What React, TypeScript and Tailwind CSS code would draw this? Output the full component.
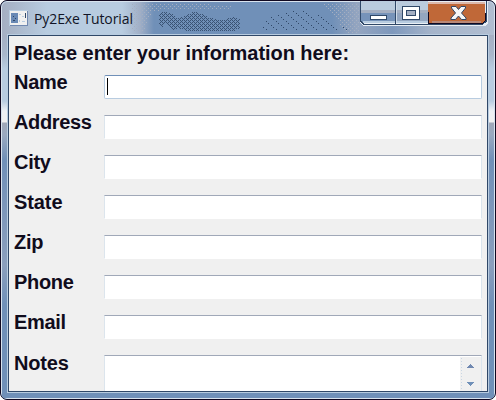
import React from "react";

const fields = [
  { name: "Address", tracking: "tracking-[-0.35px]" },
  { name: "City", tracking: "tracking-[-0.3px]" },
  { name: "State", tracking: "tracking-[-0.1px]" },
  { name: "Zip", tracking: "tracking-[-0.3px]" },
  { name: "Phone", tracking: "tracking-[-0.3px]" },
  { name: "Email", tracking: "tracking-[-0.3px]" },
];

function Titlebar() {
  return (
    <header className="relative flex h-[33px] shrink-0 items-start">
      <svg className="absolute inset-0 h-full w-full" width="492" height="33" shapeRendering="crispEdges">
        <defs>
          <pattern id="dots" width="4" height="4" patternUnits="userSpaceOnUse">
            <path d="M0 0h1v1H0zM2 0h1v1H2zM1 1h1v1H1zM0 2h1v1H0zM2 2h1v1H2zM3 3h1v1H3z" fill="#304868" />
          </pattern>
          <pattern id="sparse" width="10" height="8" patternUnits="userSpaceOnUse">
            <path d="M1 1h1v1H1zM6 5h1v1H6z" fill="#304868" />
            <path d="M4 3h1v1H4zM9 7h1v1H9z" fill="#304868" />
          </pattern>
          <pattern id="haze" width="4" height="4" patternUnits="userSpaceOnUse">
            <path d="M0 0h1v1H0zM2 2h1v1H2z" fill="#a5afc1" />
          </pattern>
        </defs>
        <path d="M130 2h60l40 1v4h-50l-30 2-8 20h-12z" fill="url(#haze)" />
        <path d="M318 1h40v30h-14l-12-18z" fill="url(#haze)" />
        <path d="M157 12l4-2 8 1 6 5 9-2 8-5 8 3 8 4 12 2 10-3 8 2v9l-5 3h-48l-8-3-6 3-4-5-3-4-3 5-4-1z" fill="url(#dots)" opacity=".85" />
        <path d="M262 16l18-6 24-2 20 8 24 13h-90z" fill="url(#sparse)" />
      </svg>
      <svg className="relative mt-[8px] ml-[7px]" width="19" height="16" shapeRendering="crispEdges">
        <rect x=".5" y=".5" width="18" height="15" fill="#f0f0f0" stroke="#b8cce0" />
        <path d="M1 15.500h17.500V1" fill="none" stroke="#7189b1" />
        <rect x="2" y="3" width="7" height="10" fill="#6989b5" />
        <path d="M4 6h1v1H4zM6 8h1v1H6zM4 10h2v1H4z" fill="#304868" />
        <path d="M10 4h2v1h-2zM13 6h2v1h-2zM10 10h1v2h-1zM13 11h3v1h-3z" fill="#b8cce0" />
        <path d="M16 3h1v5h-1z" fill="#304868" />
      </svg>
      <span className="relative mt-[6px] ml-[6px] text-[14px] leading-[22px] tracking-[-0.1px] whitespace-nowrap text-[#101426]">Py2Exe Tutorial</span>
      <svg className="absolute top-[-1px] left-[358px]" width="130" height="26" shapeRendering="crispEdges">
        <path d="M0 0h128v22l-3 3H3l-3-3z" fill="#e8eef4" />
        <path d="M1 0h67v22H3l-2-2z" fill="#7793b9" />
        <path d="M1 0h67v9H1z" fill="#bacbdd" />
        <path d="M1 9h67v3H1z" fill="#a5afc1" />
        <path d="M3 20h65v2H3z" fill="#b8cce0" />
        <path d="M36 12h32v8H36z" fill="#94a6c0" />
        <path d="M68 1h57v21H68z" fill="#c06838" />
        <path d="M68 1h57v2H68z" fill="#ddb9ac" />
        <path d="M72 20h49v2H72z" fill="#b98978" />
        <path d="M.5 0v20l3 3H123l3.500-3V0M35.500 0v23" fill="none" stroke="#304868" />
        <path d="M68.500 11v11.500h54l3-3V12" fill="none" stroke="#100820" />
        <path d="M36.500 1v21" stroke="#d0dbe8" />
        <rect x="10.500" y="14.500" width="16" height="4" fill="#fff" stroke="#304868" />
        <rect x="42.500" y="5.500" width="17" height="13" fill="#fff" stroke="#304868" />
        <rect x="46.500" y="9.500" width="9" height="5" fill="#a4afc2" stroke="#304868" />
        <path d="M91.500 5.500h4.500l2.500 3 2.500-3h4.500v1.500l-4 5 4.500 5v1.500h-4.500l-3-3.500-3 3.500h-4.500v-1.500l4.500-5-4-5z" fill="#f7f7f7" stroke="#304868" shapeRendering="geometricPrecision" />
      </svg>
    </header>
  );
}

export default function App() {
  return (
    <main className="flex h-[400px] w-[496px] flex-col overflow-hidden rounded-[7px] border border-[#100820] bg-[#7090b8]">
      <div className="flex min-h-0 flex-1 flex-col rounded-[6px] border border-[#d8e3ee] bg-[linear-gradient(90deg,#a5afc3_0,#a9b6ca_12px,#b8cce0_45px,#b8cce0_120px,#a0afc7_138px,#7090b8_152px,#7090b8_330px,#94a5c0_355px,#7e98bc_390px,#a5b4ca_430px,#b0bdd0_490px)] font-['Open_Sans',sans-serif]">
        <Titlebar />
        <div className="flex min-h-0 flex-1 bg-[linear-gradient(#a5afc3_0,#a9b7cb_20px,#b8cce0_34px,#b8cce0_66px,#edf0f4_76px,#f0f0f0_87px,#a0a8b8_88px,#9aa9c0_100px,#7090b8_125px,#7c96ba_170px,#8b9fbd_230px,#7090b8_270px)] px-[6px] pb-[6px]">
          <section className="flex flex-1 flex-col overflow-hidden border border-[#304868] bg-[#f0f0f0] pl-[5px] font-['Liberation_Sans',sans-serif] text-[20px] leading-[24px] font-bold text-[#100c1c] shadow-[0_0_0_1px_#b8cce0]">
            <h1 className="mt-[5px] h-[34px] shrink-0 tracking-[-0.05px] whitespace-nowrap">Please enter your information here:</h1>
            <label className="flex h-[40px] shrink-0">
              <span className="-mt-[5px] w-[90px] tracking-[-0.3px]">Name</span>
              <span className="flex h-[24px] w-[378px] rounded-[2px] border border-[#b8cce0] border-t-[#7090b8] bg-white pt-[2px] pl-[2px]">
                <i className="h-[17px] w-px bg-black" />
              </span>
            </label>
            {fields.map(({ name, tracking }) => (
              <label key={name} className="flex h-[40px] shrink-0">
                <span className={`-mt-[5px] w-[90px] ${tracking}`}>{name}</span>
                <span className="h-[24px] w-[378px] border border-x-[#dce5ed] border-t-[#a0a8b8] border-b-white bg-white" />
              </label>
            ))}
            <label className="flex h-[36px] shrink-0">
              <span className="-mt-[4px] w-[90px] tracking-[-0.2px]">Notes</span>
              <span className="flex h-[40px] w-[378px] justify-end border border-x-[#dce5ed] border-t-[#a0a8b8] bg-white pt-px">
                <svg width="21" height="38" shapeRendering="crispEdges">
                  <rect width="21" height="38" fill="#f0f0f0" />
                  <path d="M1.500 1v37" stroke="#c9d6e4" strokeDasharray="1 2" />
                  <path d="M6 11l4-4 4 4z" fill="#7189b1" />
                  <path d="M7 25h7l-3.500 4z" fill="#7090b8" />
                </svg>
              </span>
            </label>
          </section>
        </div>
      </div>
    </main>
  );
}
